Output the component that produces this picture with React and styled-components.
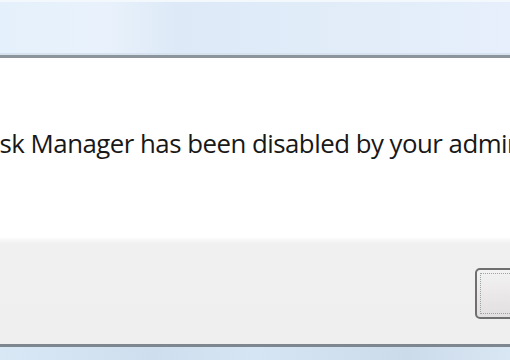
import React from 'react';
import styled, { createGlobalStyle } from 'styled-components';

const GlobalStyle = createGlobalStyle`
  html, body {
    margin: 0;
    padding: 0;
    width: 510px;
    height: 360px;
    overflow: hidden;
    background: #ffffff;
  }
`

const DialogWrapper = styled.div`
  width: 510px;
  height: 360px;
  display: flex;
  flex-direction: column;
  overflow: hidden;
  font-family: 'Open Sans', 'Noto Sans', sans-serif;
`

const TitleBar = styled.div`
  height: 55px;
  flex-shrink: 0;
  background: linear-gradient(90deg, #e4f0fb 0%, #e9f2fc 20%, #dde9f7 35%, #e1ecf9 60%, #e6effb 100%);
  border-bottom: 3px solid #8c959b;
  box-shadow: inset 0 -2px 0 #d6e2ee, inset 0 2px 0 #f3f8fd;
`

const Content = styled.div`
  height: 180px;
  flex-shrink: 0;
  background: #ffffff;
  display: flex;
  align-items: flex-start;
  padding-top: 70px;
  box-sizing: border-box;
`

// message starts off-screen on the left, like the cropped screenshot
const Message = styled.p`
  margin: 0 0 0 -28px;
  white-space: nowrap;
  font-size: 25.8px;
  line-height: 30px;
  letter-spacing: -0.5px;
  color: #181818;
`

const Footer = styled.div`
  flex: 1;
  background: linear-gradient(180deg, #fbfbfb 0px, #f0f0f0 6px, #efefef 100%);
  border-bottom: 3px solid #7e878f;
  display: flex;
  justify-content: flex-end;
  align-items: flex-start;
  padding-top: 30px;
`

const Button = styled.button`
  width: 60px;
  height: 51px;
  margin-right: -25px;
  border: 2px solid #6f6f6f;
  border-radius: 5px;
  background: linear-gradient(180deg, #f3f3f3 0%, #ebe8ea 50%, #e2dfe1 100%);
  padding: 3px;
  box-sizing: border-box;
  display: flex;
`

const FocusRing = styled.span`
  flex: 1;
  border: 1px dotted #9aa5a3;
  border-radius: 1px;
`

const Taskbar = styled.div`
  height: 13px;
  flex-shrink: 0;
  background: linear-gradient(90deg, #d9e8f5 0%, #cfdeee 30%, #d6e5f3 50%, #ccdbea 80%, #d9e7f4 100%);
`

const App = () => {
  return (
    <>
      <GlobalStyle />
      <DialogWrapper>
        <TitleBar />
        <Content>
          <Message>Task Manager has been disabled by your administrator.</Message>
        </Content>
        <Footer>
          <Button>
            <FocusRing />
          </Button>
        </Footer>
        <Taskbar />
      </DialogWrapper>
    </>
  );
}
export default App;
